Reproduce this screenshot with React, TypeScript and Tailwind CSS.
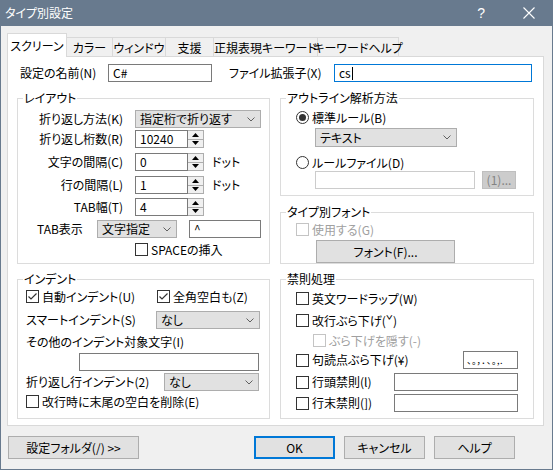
import React from 'react';

// 小さな部品
function Chevron() {
  return (
    <svg width="8" height="5" viewBox="0 0 8 5" className="shrink-0">
      <polyline points="0.5,0.5 4,4 7.5,0.5" fill="none" stroke="#606060" strokeWidth="1" />
    </svg>
  );
}

function Select({ value, className }: { value: string; className: string }) {
  return (
    <div className={`flex items-center justify-between border border-[#adadad] bg-[#e1e1e1] pl-[4px] pr-[5px] ${className}`}>
      <span>{value}</span>
      <Chevron />
    </div>
  );
}

function TextBox({ value, className }: { value?: string; className: string }) {
  return (
    <div className={`flex items-center border border-[#7a7a7a] bg-white px-[4px] ${className}`}>
      {value}
    </div>
  );
}

function Spin({ value }: { value: string }) {
  return (
    <div className="flex h-[18px]">
      <div className="flex w-[53px] items-center border border-[#7a7a7a] bg-white px-[4px]">{value}</div>
      <div className="flex w-[16px] flex-col border border-l-0 border-[#adadad] bg-[#f0f0f0]">
        <div className="flex flex-1 items-center justify-center border-b border-[#adadad]">
          <svg width="7" height="4" viewBox="0 0 7 4">
            <polygon points="3.5,0 7,4 0,4" fill="#000" />
          </svg>
        </div>
        <div className="flex flex-1 items-center justify-center">
          <svg width="7" height="4" viewBox="0 0 7 4">
            <polygon points="0,0 7,0 3.5,4" fill="#000" />
          </svg>
        </div>
      </div>
    </div>
  );
}

function Check({ label, checked, disabled, className = '' }: { label: string; checked?: boolean; disabled?: boolean; className?: string }) {
  return (
    <div className={`flex items-center gap-[3px] ${disabled ? 'text-[#a0a0a0]' : ''} ${className}`}>
      <div className={`flex h-[13px] w-[13px] shrink-0 items-center justify-center border bg-white ${disabled ? 'border-[#c4c4c4]' : 'border-[#333]'}`}>
        {checked && (
          <svg width="11" height="11" viewBox="0 0 11 11">
            <polyline points="1.5,5.5 4,8 9.5,2.5" fill="none" stroke="#333" strokeWidth="1.2" />
          </svg>
        )}
      </div>
      <span className="whitespace-nowrap">{label}</span>
    </div>
  );
}

function Radio({ label, checked }: { label: string; checked?: boolean }) {
  return (
    <div className="flex items-center gap-[3px]">
      <div className="flex h-[13px] w-[13px] items-center justify-center rounded-full border border-[#333] bg-white">
        {checked && <div className="h-[7px] w-[7px] rounded-full bg-[#333]" />}
      </div>
      <span>{label}</span>
    </div>
  );
}

function Group({ title, className, children }: { title: string; className: string; children?: React.ReactNode }) {
  return (
    <div className={`relative border border-[#dcdcdc] ${className}`}>
      <span className="absolute left-[5px] top-[-9px] bg-white px-[1px] leading-[16px]">{title}</span>
      {children}
    </div>
  );
}

function Button({ label, className }: { label: string; className: string }) {
  return (
    <div className={`flex h-[23px] items-center justify-center border border-[#adadad] bg-[#e1e1e1] ${className}`}>
      {label}
    </div>
  );
}

const tabs = [
  { label: 'カラー', w: 'w-[46px]' },
  { label: 'ウィンドウ', w: 'w-[53px]' },
  { label: '支援', w: 'w-[48px]' },
  { label: '正規表現キーワード', w: 'w-[104px]' },
  { label: 'キーワードヘルプ', w: 'w-[81px]' },
];

export default function App() {
  return (
    <div className="flex h-[470px] w-[553px] flex-col bg-[#687a8e] px-px pb-px font-['Meiryo_UI','Noto_Sans_CJK_JP',sans-serif] text-[12px] leading-none text-black [font-feature-settings:'palt']">
      {/* タイトルバー */}
      <div className="flex h-[26px] shrink-0 items-center pl-[4px] text-white">
        <span>タイプ別設定</span>
        <span className="ml-auto mr-[38px] font-['Liberation_Sans',sans-serif] text-[14px]">?</span>
        <svg width="12" height="12" viewBox="0 0 12 12" className="mr-[17px]">
          <path d="M0.5 0.5 L11.5 11.5 M11.5 0.5 L0.5 11.5" stroke="#fff" strokeWidth="1.1" />
        </svg>
      </div>

      <div className="flex-1 bg-[#f0f0f0] pl-[6px] pr-[8px] pt-[7px]">
        {/* タブ */}
        <div className="flex h-[23px] items-end">
          <div className="relative z-10 mb-[-1px] flex h-[24px] w-[60px] justify-center whitespace-nowrap border border-b-0 border-[#d9d9d9] bg-white pt-[6px]">
            スクリーン
          </div>
          {tabs.map((t) => (
            <div key={t.label} className={`flex h-[19px] items-center justify-center whitespace-nowrap border-r border-t border-[#d9d9d9] bg-[#f0f0f0] pt-[2px] ${t.w}`}>
              {t.label}
            </div>
          ))}
        </div>

        {/* パネル */}
        <div className="h-[370px] w-[537px] border border-[#d9d9d9] bg-white">
          <div className="mt-[7px] flex h-[18px] items-center pl-[12px]">
            <span className="w-[88px]">設定の名前(N)</span>
            <TextBox value="C#" className="h-[18px] w-[104px]" />
            <span className="ml-[17px] w-[105px]">ファイル拡張子(X)</span>
            <div className="flex h-[18px] w-[198px] items-center border border-[#0078d7] bg-white px-[4px]">
              cs<span className="ml-px h-[13px] w-px bg-black" />
            </div>
          </div>

          <div className="mt-[16px] flex pl-[9px]">
            {/* 左列 */}
            <div className="flex w-[253px] flex-col">
              <Group title="レイアウト" className="h-[166px]">
                <div className="mt-[11px] flex h-[18px] items-center">
                  <span className="w-[105px] text-right">折り返し方法(K)</span>
                  <Select value="指定桁で折り返す" className="ml-[12px] h-[18px] w-[126px]" />
                </div>
                <div className="mt-[2px] flex h-[18px] items-center">
                  <span className="w-[105px] text-right">折り返し桁数(R)</span>
                  <div className="ml-[12px]"><Spin value="10240" /></div>
                </div>
                <div className="mt-[5px] flex h-[18px] items-center">
                  <span className="w-[105px] text-right">文字の間隔(C)</span>
                  <div className="ml-[12px]"><Spin value="0" /></div>
                  <span className="ml-[8px]">ドット</span>
                </div>
                <div className="mt-[5px] flex h-[18px] items-center">
                  <span className="w-[105px] text-right">行の間隔(L)</span>
                  <div className="ml-[12px]"><Spin value="1" /></div>
                  <span className="ml-[8px]">ドット</span>
                </div>
                <div className="mt-[4px] flex h-[18px] items-center">
                  <span className="w-[105px] text-right">TAB幅(T)</span>
                  <div className="ml-[12px]"><Spin value="4" /></div>
                </div>
                <div className="mt-[4px] flex h-[18px] items-center pl-[19px]">
                  <span className="w-[60px]">TAB表示</span>
                  <Select value="文字指定" className="h-[18px] w-[80px]" />
                  <TextBox value="^" className="ml-[12px] h-[18px] w-[72px]" />
                </div>
                <div className="mt-[4px] flex h-[15px] items-center pl-[117px]">
                  <Check label="SPACEの挿入" />
                </div>
              </Group>

              <Group title="インデント" className="mt-[15px] h-[140px]">
                <div className="mt-[9px] flex h-[15px] items-center pl-[8px]">
                  <Check label="自動インデント(U)" checked className="w-[131px]" />
                  <Check label="全角空白も(Z)" checked />
                </div>
                <div className="mt-[7px] flex h-[18px] items-center pl-[8px]">
                  <span className="w-[130px]">スマートインデント(S)</span>
                  <Select value="なし" className="h-[18px] w-[104px]" />
                </div>
                <div className="mt-[5px] flex h-[15px] items-center pl-[8px]">その他のインデント対象文字(I)</div>
                <div className="mt-[4px] pl-[61px]">
                  <TextBox className="h-[18px] w-[180px]" />
                </div>
                <div className="mt-[2px] flex h-[18px] items-center pl-[8px]">
                  <span className="w-[138px]">折り返し行インデント(2)</span>
                  <Select value="なし" className="h-[18px] w-[95px]" />
                </div>
                <div className="mt-[3px] flex h-[15px] items-center pl-[8px]">
                  <Check label="改行時に末尾の空白を削除(E)" />
                </div>
              </Group>
            </div>

            {/* 右列 */}
            <div className="ml-[10px] flex w-[254px] flex-col">
              <Group title="アウトライン解析方法" className="h-[98px]">
                <div className="mt-[11px] flex h-[15px] items-center pl-[15px]">
                  <Radio label="標準ルール(B)" checked />
                </div>
                <div className="mt-[3px] pl-[34px]">
                  <Select value="テキスト" className="h-[19px] w-[142px]" />
                </div>
                <div className="mt-[8px] flex h-[15px] items-center pl-[15px]">
                  <Radio label="ルールファイル(D)" />
                </div>
                <div className="mt-[1px] flex h-[18px] pl-[34px]">
                  <TextBox className="h-[18px] w-[160px] border-[#cccccc]" />
                  <div className="ml-[7px] flex h-[18px] w-[34px] items-center justify-center border border-[#bfbfbf] bg-[#cccccc] text-[#838383]">
                    (1)...
                  </div>
                </div>
              </Group>

              <Group title="タイプ別フォント" className="mt-[16px] h-[52px]">
                <div className="mt-[9px] flex h-[15px] items-center pl-[15px]">
                  <Check label="使用する(G)" disabled />
                </div>
                <div className="mt-[3px] pl-[35px]">
                  <Button label="フォント(F)..." className="h-[20px] w-[139px]" />
                </div>
              </Group>

              <Group title="禁則処理" className="mt-[15px] h-[140px]">
                <div className="mt-[11px] flex h-[15px] items-center pl-[15px]">
                  <Check label="英文ワードラップ(W)" />
                </div>
                <div className="mt-[7px] flex h-[15px] items-center pl-[15px]">
                  <Check label="改行ぶら下げ(ˇ)" />
                </div>
                <div className="mt-[5px] flex h-[15px] items-center pl-[32px]">
                  <Check label="ぶら下げを隠す(-)" disabled />
                </div>
                <div className="mt-[3px] flex h-[18px] items-center pl-[15px]">
                  <Check label="句読点ぶら下げ(¥)" className="w-[167px]" />
                  <div className="flex h-[18px] w-[55px] items-center overflow-hidden whitespace-nowrap border border-[#7a7a7a] bg-white pl-[3px] text-[9px] tracking-[0.5px]">
                    、。，．､｡,.
                  </div>
                </div>
                <div className="mt-[4px] flex h-[18px] items-center pl-[15px]">
                  <Check label="行頭禁則(l)" className="w-[98px]" />
                  <TextBox className="h-[18px] w-[124px]" />
                </div>
                <div className="mt-[3px] flex h-[18px] items-center pl-[15px]">
                  <Check label="行末禁則(])" className="w-[98px]" />
                  <TextBox className="h-[18px] w-[124px]" />
                </div>
              </Group>
            </div>
          </div>
        </div>

        {/* 下部ボタン */}
        <div className="mt-[10px] flex">
          <Button label="設定フォルダ(/) >>" className="ml-px w-[131px]" />
          <div className="ml-[115px] flex h-[23px] w-[81px] items-center justify-center border-2 border-[#0078d7] bg-[#e1e1e1]">
            OK
          </div>
          <Button label="キャンセル" className="ml-[9px] w-[81px]" />
          <Button label="ヘルプ" className="ml-[9px] w-[81px]" />
        </div>
      </div>
    </div>
  );
}
